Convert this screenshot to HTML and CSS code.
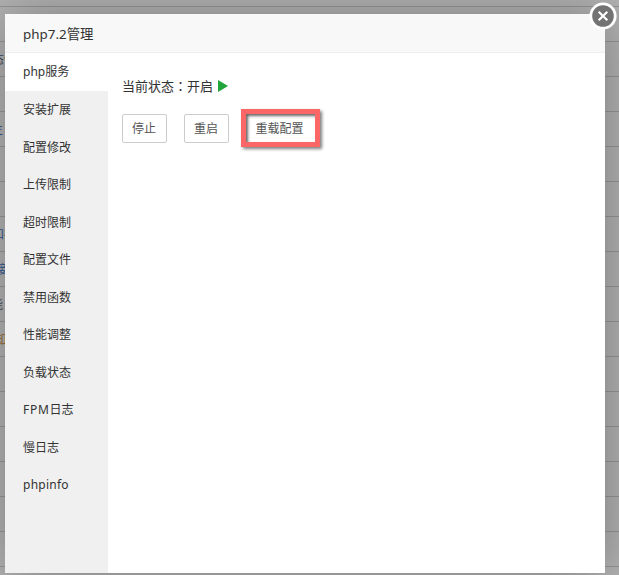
FILE: index.html
```
<!DOCTYPE html>
<html lang="zh-CN">
<head>
<meta charset="utf-8">
<title>php7.2管理</title>
<link rel="stylesheet" href="styles.css">
</head>
<body>
<div class="backdrop">
  <div class="row row-first"></div>
  <div class="row"></div>
  <div class="row"><span class="clip pair">态<b>信</b></span></div>
  <div class="row"></div>
  <div class="row"><span class="clip link short">主</span></div>
  <div class="row"></div>
  <div class="row"></div>
  <div class="row"><span class="clip link pair">和<b>在</b></span></div>
  <div class="row"><span class="clip link">接</span></div>
  <div class="row"><span class="clip short">能</span></div>
  <div class="row"><span class="clip"><b>知</b></span></div>
  <div class="row"></div>
  <div class="row"></div>
  <div class="row"></div>
  <div class="row"></div>
  <div class="row"></div>
  <div class="row"></div>
</div>
<section class="dialog">
  <header class="title">php7.2管理</header>
  <div class="body">
    <nav class="menu">
      <a class="item active">php服务</a>
      <a class="item">安装扩展</a>
      <a class="item">配置修改</a>
      <a class="item">上传限制</a>
      <a class="item">超时限制</a>
      <a class="item">配置文件</a>
      <a class="item">禁用函数</a>
      <a class="item">性能调整</a>
      <a class="item">负载状态</a>
      <a class="item"><span class="fpm">FPM</span>日志</a>
      <a class="item">慢日志</a>
      <a class="item phpinfo">phpinfo</a>
    </nav>
    <main class="content">
      <p class="status">当前状态<span lang="zh-TW" class="colon">：</span>开启<svg class="play" viewBox="0 0 10 12"><path d="M0 0L10 6L0 12Z"/></svg></p>
      <div class="actions">
        <button class="btn">停止</button>
        <button class="btn">重启</button>
        <div class="highlight"><button class="btn plain">重载配置</button></div>
      </div>
    </main>
  </div>
  <svg class="close" viewBox="0 0 28 28">
    <circle cx="14" cy="14" r="12.2"/>
    <path d="M9.7 9.7L18.3 18.3M18.3 9.7L9.7 18.3"/>
  </svg>
</section>
</body>
</html>
```
FILE: styles.css
```
* {
  box-sizing: border-box;
}

body {
  margin: 0;
  width: 619px;
  height: 575px;
  position: relative;
  overflow: hidden;
  background: #b2b2b2;
  color: #333;
  font: 12px/20px "Noto Sans", "Noto Sans CJK SC", sans-serif;
}

.backdrop {
  display: flex;
  flex-direction: column;
}

.row {
  flex: none;
  height: 35px;
  border-bottom: 1px solid #959595;
  line-height: 35px;
}

.row-first {
  height: 7px;
}

.clip {
  display: block;
  margin-left: -5px;
  white-space: nowrap;
  color: #3c4c5c;
}

.clip b {
  font-weight: 400;
  color: #95642c;
}

.pair {
  margin-left: -8px;
}

.short {
  margin-left: -9px;
}

.link {
  color: #315b91;
}

.link b {
  color: #704050;
}

.dialog {
  position: absolute;
  left: 5px;
  top: 14px;
  width: 600px;
  height: 559px;
  display: flex;
  flex-direction: column;
  background: #fff;
  box-shadow: 1px 1px 50px rgba(0, 0, 0, 0.3);
}

.title {
  flex: none;
  height: 39px;
  padding-left: 18px;
  border-bottom: 1px solid #eee;
  background: #f8f8f8;
  font-size: 13.4px;
  line-height: 40px;
}

.body {
  flex: 1;
  display: flex;
}

.menu {
  width: 103px;
  background: #f0f0f0;
}

.item {
  display: block;
  height: 37.5px;
  padding-left: 18px;
  line-height: 37.5px;
}

.active {
  height: 38px;
  background: #fff;
}

.fpm {
  letter-spacing: 0.7px;
}

.phpinfo {
  letter-spacing: 0.25px;
}

.content {
  flex: 1;
  padding: 23px 14px;
}

.status {
  display: flex;
  align-items: center;
  height: 20px;
  margin: 0 0 14px;
  font-size: 13px;
}

.colon {
  font-family: "Noto Sans CJK TC", sans-serif;
}

.play {
  width: 10px;
  height: 12px;
  margin-left: 5px;
  fill: #20a53a;
}

.actions {
  display: flex;
  align-items: center;
  height: 36px;
  gap: 17px;
}

.btn {
  width: 45px;
  height: 29px;
  padding: 0 1px 0 0;
  border: 1px solid #ccc;
  border-radius: 2px;
  background: #fff;
  color: #555;
  font: inherit;
  line-height: 25px;
}

.highlight {
  width: 79px;
  height: 38px;
  margin-left: -5px;
  border: 5px solid #fb6767;
  box-shadow: 2px 2px 3px rgba(0, 0, 0, 0.5), inset 2px 2px 3px rgba(0, 0, 0, 0.6);
}

.plain {
  width: 69px;
  height: 28px;
  padding-right: 2px;
  border: 0;
  background: transparent;
}

.close {
  position: absolute;
  left: 584px;
  top: -12px;
  width: 28px;
  height: 28px;
  fill: #737373;
  stroke: #fff;
  stroke-width: 2.8;
}

.close path {
  stroke-width: 2.2;
}
```
